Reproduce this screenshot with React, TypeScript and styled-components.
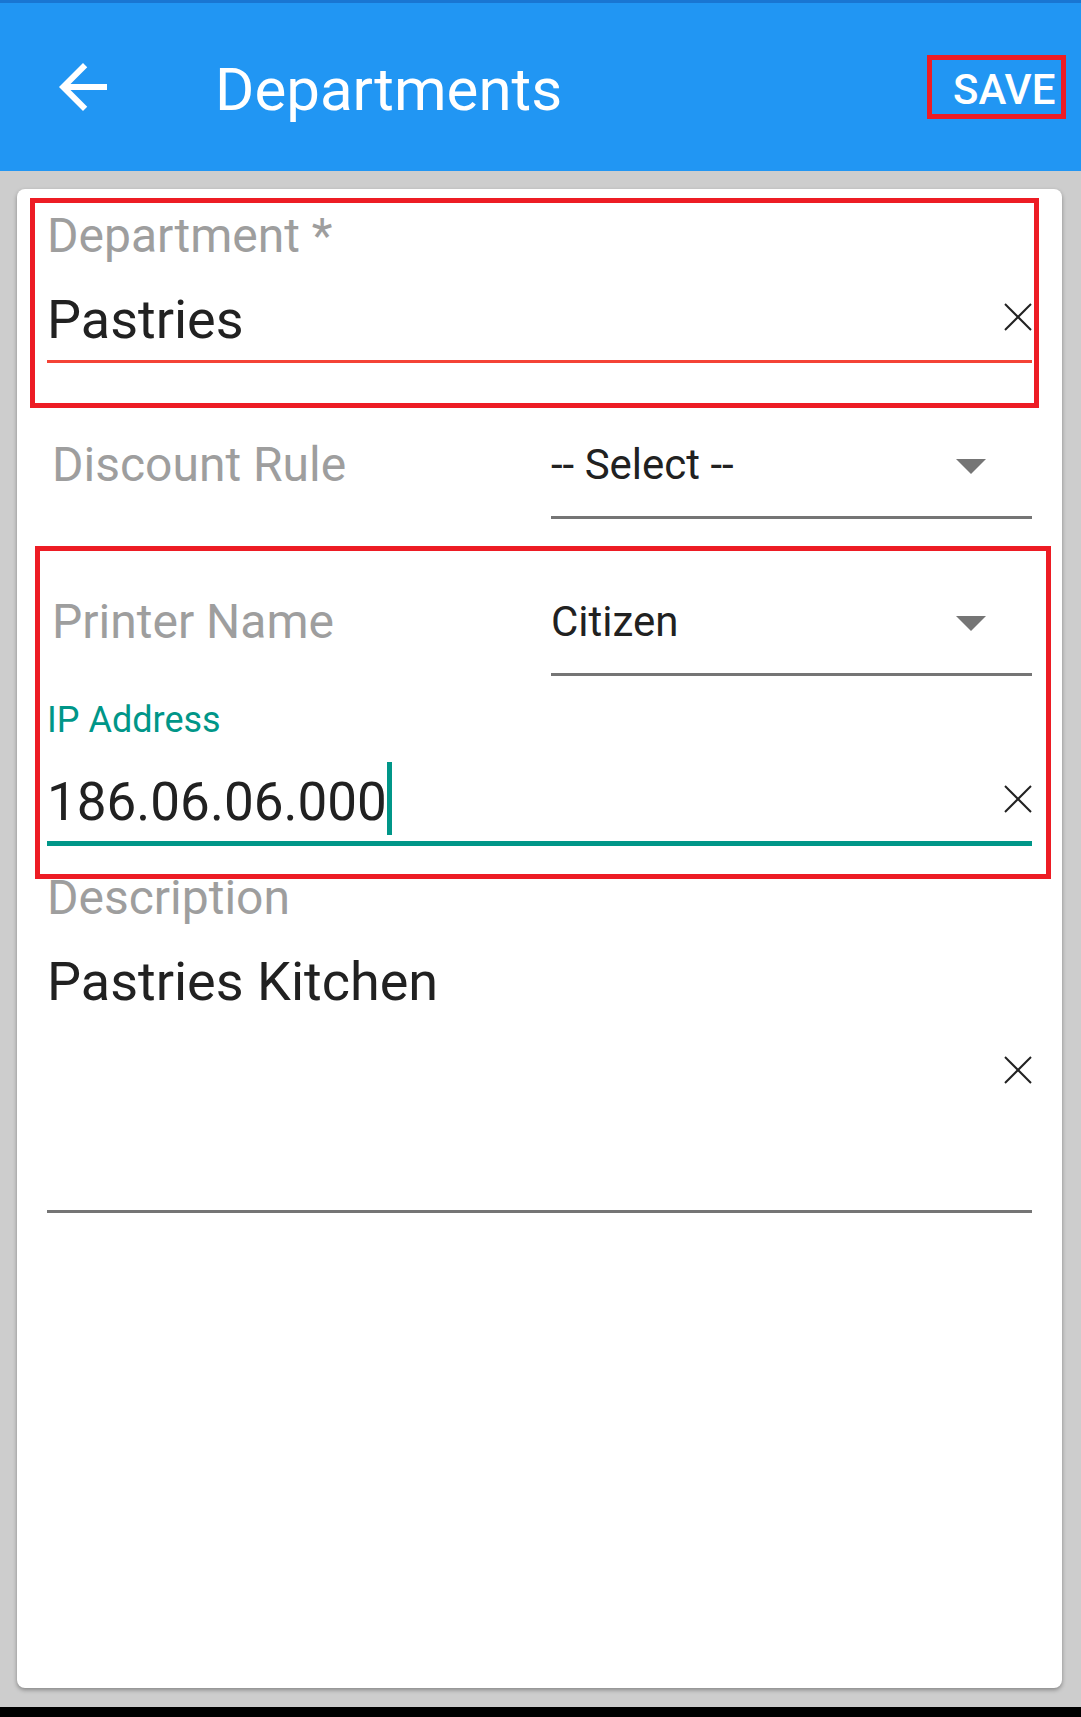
import styled, { createGlobalStyle } from "styled-components";
import { MdArrowBack } from "react-icons/md";

const GlobalStyle = createGlobalStyle`
  html, body {
    margin: 0;
    padding: 0;
  }
  body {
    font-family: Roboto, "Noto Sans", "Liberation Sans", sans-serif;
    background: #000;
  }
  * {
    box-sizing: border-box;
  }
`;

const Screen = styled.div`
  display: flex;
  flex-direction: column;
  width: 1081px;
  height: 1717px;
`;

const StatusStrip = styled.div`
  height: 3px;
  background: #1976d2;
`;

const AppBar = styled.header`
  height: 168px;
  display: flex;
  align-items: center;
  padding: 0 15px 0 47px;
  background: #2196f3;
  color: #fff;
`;

const BackButton = styled.div`
  width: 72px;
  height: 72px;
  display: flex;
  align-items: center;
  justify-content: center;
  margin-right: 96px;
`;

const Title = styled.h1`
  flex: 1;
  margin: 5px 0 0;
  font-size: 60px;
  line-height: 60px;
  font-weight: 400;
`;

// the red outline around SAVE is part of the screenshot
const SaveButton = styled.button`
  width: 139px;
  height: 64px;
  padding: 5px 0 0 21px;
  border: 5px solid #ed1c24;
  background: transparent;
  color: #fff;
  font-family: inherit;
  font-size: 42px;
  font-weight: 500;
  line-height: 49px;
  text-align: left;
`;

const Body = styled.main`
  flex: 1;
  display: flex;
  padding: 18px 19px 19px 17px;
  background: #cdcdcd;
`;

const NavBar = styled.div`
  height: 10px;
  background: #000;
`;

const Card = styled.section`
  flex: 1;
  display: flex;
  flex-direction: column;
  padding: 19px 30px 0 30px;
  background: #fff;
  border-radius: 8px;
  box-shadow: 0 2px 4px rgba(0, 0, 0, 0.35);
`;

const Highlight = styled.div<{ $top: number; $right: number; $bottom: number; $left: number; $gap?: number }>`
  position: relative;
  margin-top: ${(p) => p.$gap ?? 0}px;

  &::after {
    content: "";
    position: absolute;
    top: ${(p) => p.$top}px;
    right: ${(p) => p.$right}px;
    bottom: ${(p) => p.$bottom}px;
    left: ${(p) => p.$left}px;
    border: 5px solid #ed1c24;
    pointer-events: none;
  }
`;

const Field = styled.div<{ $gap?: number }>`
  display: flex;
  flex-direction: column;
  margin-top: ${(p) => p.$gap ?? 0}px;
`;

const FieldLabel = styled.label<{ $focused?: boolean }>`
  font-size: ${(p) => (p.$focused ? 36 : 48)}px;
  line-height: ${(p) => (p.$focused ? 41 : 56)}px;
  color: ${(p) => (p.$focused ? "#009688" : "#9e9e9e")};
`;

const ValueRow = styled.div<{ $focused?: boolean; $tall?: boolean }>`
  display: flex;
  align-items: center;
  height: ${(p) => (p.$tall ? 244 : 62)}px;
  margin-top: ${(p) => (p.$focused ? 30 : 25)}px;
`;

const Value = styled.div<{ $size?: number }>`
  flex: 1;
  align-self: flex-start;
  font-size: ${(p) => p.$size ?? 54}px;
  line-height: 62px;
  color: #212121;
`;

const Caret = styled.span`
  display: inline-block;
  width: 5px;
  height: 73px;
  margin: -9px 0 0 0;
  vertical-align: -15px;
  background: #009688;
`;

const ClearIcon = styled.svg`
  flex-shrink: 0;
  width: 28px;
  height: 28px;
  margin-bottom: 6px;
`;

const Underline = styled.div<{ $color: string; $thick?: boolean; $gap: number }>`
  height: ${(p) => (p.$thick ? 5 : 3)}px;
  margin-top: ${(p) => p.$gap}px;
  background: ${(p) => p.$color};
`;

const SelectRow = styled.div<{ $gap?: number }>`
  display: grid;
  grid-template-columns: 504px 1fr;
  margin-top: ${(p) => p.$gap ?? 0}px;
`;

const SelectLabel = styled.div`
  padding-left: 5px;
  font-size: 48px;
  line-height: 48px;
  color: #9e9e9e;
`;

const SelectControl = styled.div`
  display: flex;
  flex-direction: column;
`;

const SelectValueRow = styled.div`
  display: flex;
  align-items: center;
  height: 48px;
  padding-right: 46px;
`;

const SelectText = styled.div`
  flex: 1;
  font-size: 42px;
  line-height: 48px;
  color: #212121;
`;

const DropArrow = styled.svg`
  width: 30px;
  height: 15px;
  margin-top: 3px;
`;

const SelectUnderline = styled.div`
  height: 3px;
  margin-top: 27px;
  background: #757575;
`;

function Clear() {
  return (
    <ClearIcon viewBox="0 0 28 28">
      <line x1="1" y1="1" x2="27" y2="27" stroke="#212121" strokeWidth="2" />
      <line x1="27" y1="1" x2="1" y2="27" stroke="#212121" strokeWidth="2" />
    </ClearIcon>
  );
}

function Select({ label, value, gap }: { label: string; value: string; gap?: number }) {
  return (
    <SelectRow $gap={gap}>
      <SelectLabel>{label}</SelectLabel>
      <SelectControl>
        <SelectValueRow>
          <SelectText>{value}</SelectText>
          <DropArrow viewBox="0 0 30 15">
            <polygon points="0,0 30,0 15,15" fill="#757575" />
          </DropArrow>
        </SelectValueRow>
        <SelectUnderline />
      </SelectControl>
    </SelectRow>
  );
}

export default function App() {
  return (
    <>
      <GlobalStyle />
      <Screen>
        <StatusStrip />
        <AppBar>
          <BackButton>
            <MdArrowBack size={72} color="#fff" />
          </BackButton>
          <Title>Departments</Title>
          <SaveButton>SAVE</SaveButton>
        </AppBar>
        <Body>
          <Card>
            <Highlight $top={-10} $right={-7} $bottom={-45} $left={-17}>
              <Field>
                <FieldLabel>Department *</FieldLabel>
                <ValueRow>
                  <Value>Pastries</Value>
                  <Clear />
                </ValueRow>
                <Underline $color="#f44336" $gap={9} />
              </Field>
            </Highlight>

            <Select label="Discount Rule" value="-- Select --" gap={78} />

            <Highlight $gap={79} $top={-52} $right={-19} $bottom={-33} $left={-12}>
              <Select label="Printer Name" value="Citizen" />
              <Field $gap={24}>
                <FieldLabel $focused>IP Address</FieldLabel>
                <ValueRow $focused>
                  <Value $size={53}>
                    186.06.06.000
                    <Caret />
                  </Value>
                  <Clear />
                </ValueRow>
                <Underline $color="#009688" $thick $gap={8} />
              </Field>
            </Highlight>

            <Field $gap={24}>
              <FieldLabel>Description</FieldLabel>
              <ValueRow $tall>
                <Value>Pastries Kitchen</Value>
                <Clear />
              </ValueRow>
              <Underline $color="#757575" $gap={15} />
            </Field>
          </Card>
        </Body>
        <NavBar />
      </Screen>
    </>
  );
}
